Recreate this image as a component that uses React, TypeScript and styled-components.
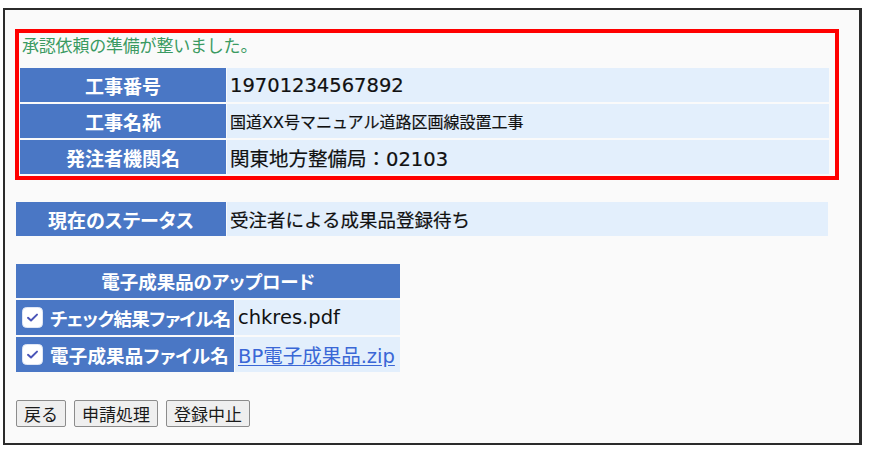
import React from "react";
import styled, { createGlobalStyle } from "styled-components";

const GlobalStyle = createGlobalStyle`
  body {
    margin: 0;
    background: #ffffff;
    font-family: "DejaVu Sans", "Noto Sans CJK JP", sans-serif;
    color: #111;
  }
`;

const infoRows = [
  { label: "工事番号", value: "19701234567892", small: false },
  { label: "工事名称", value: "国道XX号マニュアル道路区画線設置工事", small: true },
  { label: "発注者機関名", value: "関東地方整備局：02103", small: false },
];

const uploads = [
  { label: "チェック結果ファイル名", value: "chkres.pdf", link: false, tight: true },
  { label: "電子成果品ファイル名", value: "BP電子成果品.zip", link: true, tight: false },
];

const CheckIcon = () => (
  <svg width="21" height="21" viewBox="0 0 21 21">
    <rect x="0.5" y="0.5" width="20" height="20" rx="4" fill="#ffffff" stroke="#dfe6f5" />
    <path d="M6 10.8 L9 13.5 L15 7.6" fill="none" stroke="#4a55b8" strokeWidth="2" strokeLinecap="round" strokeLinejoin="round" />
  </svg>
);

export default function App() {
  return (
    <>
      <GlobalStyle />
      <Frame>
        <Highlight>
          <Message>承認依頼の準備が整いました。</Message>
          <InfoGrid>
            {infoRows.map(r => (
              <React.Fragment key={r.label}>
                <HeadCell>{r.label}</HeadCell>
                <ValueCell small={r.small}>{r.value}</ValueCell>
              </React.Fragment>
            ))}
          </InfoGrid>
        </Highlight>

        <StatusGrid>
          <HeadCell>現在のステータス</HeadCell>
          <ValueCell status>受注者による成果品登録待ち</ValueCell>
        </StatusGrid>

        <UploadGrid>
          <UploadTitle>電子成果品のアップロード</UploadTitle>
          {uploads.map(u => (
            <React.Fragment key={u.label}>
              <UploadLabel tight={u.tight}>
                <CheckIcon />
                <span>{u.label}</span>
              </UploadLabel>
              <UploadValue>{u.link ? <FileLink href="#">{u.value}</FileLink> : u.value}</UploadValue>
            </React.Fragment>
          ))}
        </UploadGrid>

        <Buttons>
          <Button>戻る</Button>
          <Button>申請処理</Button>
          <Button>登録中止</Button>
        </Buttons>
      </Frame>
    </>
  );
}

const Frame = styled.div`
  box-sizing: border-box;
  margin: 8px 0 0 3px;
  width: 859px;
  height: 437px;
  border: 2px solid #2b2b2b;
  border-right-width: 3px;
  background: #fafafa;
  padding: 19px 0 0 10px;
  display: flex;
  flex-direction: column;
  align-items: flex-start;
`;

const Highlight = styled.div`
  box-sizing: border-box;
  width: 824px;
  border: 4px solid #ff0000;
  padding: 0 6px 2px 1px;
  display: flex;
  flex-direction: column;
`;

const Message = styled.div`
  font-family: "Noto Sans CJK JP", sans-serif;
  font-size: 17px;
  line-height: 24px;
  height: 25px;
  color: #3b9a62;
  padding-left: 2px;
  margin-bottom: 10px;
  letter-spacing: -0.2px;
`;

const InfoGrid = styled.div`
  display: grid;
  grid-template-columns: 206px 1fr;
  grid-auto-rows: 34px;
  row-gap: 2px;
  column-gap: 1px;
`;

const HeadCell = styled.div`
  background: #4a77c5;
  color: #ffffff;
  font-family: "Noto Sans CJK JP", sans-serif;
  font-weight: 700;
  font-size: 19px;
  font-feature-settings: "palt";
  display: flex;
  align-items: center;
  justify-content: center;
`;

const ValueCell = styled.div<{ small?: boolean; status?: boolean }>`
  background: #e3effc;
  display: flex;
  align-items: center;
  padding-left: 3px;
  font-size: ${p => (p.small ? "16px" : p.status ? "18.5px" : "19.5px")};
  white-space: nowrap;
  -webkit-text-stroke: 0.2px #111;
`;

const StatusGrid = styled.div`
  margin: 22px 0 0 1px;
  width: 812px;
  display: grid;
  grid-template-columns: 210px 1fr;
  grid-auto-rows: 34px;
  column-gap: 1px;
`;

const UploadGrid = styled.div`
  margin: 28px 0 0 1px;
  width: 384px;
  display: grid;
  grid-template-columns: 218px 1fr;
  grid-template-rows: 34px 35px 35px;
  row-gap: 2px;
  column-gap: 1px;
`;

const UploadTitle = styled(HeadCell)`
  grid-column: 1 / -1;
  font-size: 18.5px;
`;

const UploadLabel = styled(HeadCell)<{ tight?: boolean }>`
  justify-content: flex-start;
  gap: 7px;
  padding-left: 6px;
  font-size: 18.5px;
  letter-spacing: ${p => (p.tight ? "-0.6px" : "0.2px")};
  white-space: nowrap;
  overflow: hidden;
  svg {
    flex: none;
  }
`;

const UploadValue = styled.div`
  background: #e3effc;
  display: flex;
  align-items: center;
  padding-left: 3px;
  font-size: 19.5px;
  white-space: nowrap;
`;

const FileLink = styled.a`
  color: #3a67d6;
  text-decoration: underline;
  text-underline-offset: 2px;
`;

const Buttons = styled.div`
  margin: 28px 0 0 1px;
  display: flex;
  gap: 8px;
`;

const Button = styled.button`
  box-sizing: border-box;
  height: 27px;
  padding: 0 7px;
  background: #efefef;
  border: 1px solid #8c8c8c;
  border-radius: 2px;
  font-family: "Noto Sans CJK JP", sans-serif;
  font-size: 17px;
  line-height: 1;
  color: #1a1a1a;
`;
